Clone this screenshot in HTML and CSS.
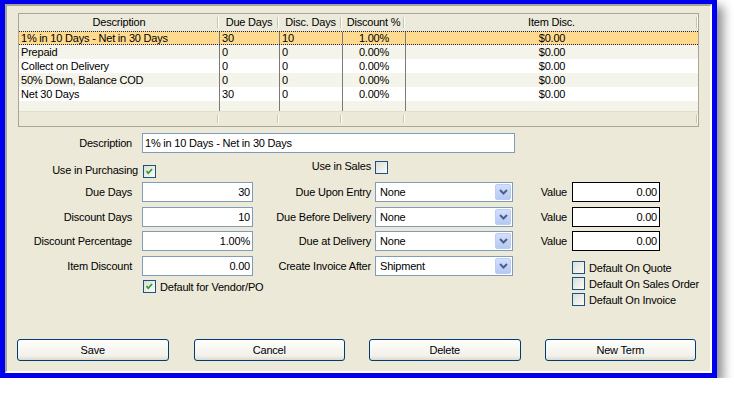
FILE: index.html
```html
<!DOCTYPE html>
<html lang="en">
<head>
    <meta charset="UTF-8">
    <title>Terms</title>
    <link rel="stylesheet" href="styles.css">
</head>
<body>
    <div class="window">
        <div class="panel">
            <div class="terms-grid">
                <div class="grid-head">
                    <div class="hcell">Description</div>
                    <div class="hcell">Due Days</div>
                    <div class="hcell">Disc. Days</div>
                    <div class="hcell">Discount %</div>
                    <div class="hcell">Item Disc.</div>
                </div>
                <div class="grid-row selected">
                    <div class="cell">1% in 10 Days - Net in 30 Days</div>
                    <div class="cell">30</div>
                    <div class="cell">10</div>
                    <div class="cell center">1.00%</div>
                    <div class="cell center">$0.00</div>
                </div>
                <div class="grid-row">
                    <div class="cell">Prepaid</div>
                    <div class="cell">0</div>
                    <div class="cell">0</div>
                    <div class="cell center">0.00%</div>
                    <div class="cell center">$0.00</div>
                </div>
                <div class="grid-row alt">
                    <div class="cell">Collect on Delivery</div>
                    <div class="cell">0</div>
                    <div class="cell">0</div>
                    <div class="cell center">0.00%</div>
                    <div class="cell center">$0.00</div>
                </div>
                <div class="grid-row">
                    <div class="cell">50% Down, Balance COD</div>
                    <div class="cell">0</div>
                    <div class="cell">0</div>
                    <div class="cell center">0.00%</div>
                    <div class="cell center">$0.00</div>
                </div>
                <div class="grid-row alt">
                    <div class="cell">Net 30 Days</div>
                    <div class="cell">30</div>
                    <div class="cell">0</div>
                    <div class="cell center">0.00%</div>
                    <div class="cell center">$0.00</div>
                </div>
                <div class="grid-row empty">
                    <div class="cell"></div>
                    <div class="cell"></div>
                    <div class="cell"></div>
                    <div class="cell"></div>
                    <div class="cell"></div>
                </div>
                <div class="grid-foot">
                    <div class="fcell"></div>
                    <div class="fcell"></div>
                    <div class="fcell"></div>
                    <div class="fcell"></div>
                    <div class="fcell"></div>
                </div>
            </div>

            <div class="term-form">
                <label class="lbl r-desc c1">Description</label>
                <div class="field desc-field">1% in 10 Days - Net in 30 Days</div>

                <label class="lbl r-use c1 tight">Use in Purchasing</label>
                <span class="check checked purch-check">
                    <svg width="13" height="13" viewBox="0 0 13 13"><polyline points="3,6 5,8.5 9.5,3.5" fill="none" stroke="#21a121" stroke-width="2"/></svg>
                </span>
                <label class="lbl r-use c3">Use in Sales</label>
                <span class="check sales-check"></span>

                <label class="lbl r1 c1">Due Days</label>
                <div class="field num r1 c2">30</div>
                <label class="lbl r1 c3">Due Upon Entry</label>
                <div class="dropdown r1 c4">None<span class="drop-btn"><svg width="9" height="6" viewBox="0 0 9 6"><polyline points="1,1 4.5,4.5 8,1" fill="none" stroke="#4d6185" stroke-width="2"/></svg></span></div>
                <label class="lbl r1 c5">Value</label>
                <div class="field num value r1 c6">0.00</div>

                <label class="lbl r2 c1">Discount Days</label>
                <div class="field num r2 c2">10</div>
                <label class="lbl r2 c3">Due Before Delivery</label>
                <div class="dropdown r2 c4">None<span class="drop-btn"><svg width="9" height="6" viewBox="0 0 9 6"><polyline points="1,1 4.5,4.5 8,1" fill="none" stroke="#4d6185" stroke-width="2"/></svg></span></div>
                <label class="lbl r2 c5">Value</label>
                <div class="field num value r2 c6">0.00</div>

                <label class="lbl r3 c1">Discount Percentage</label>
                <div class="field num r3 c2">1.00%</div>
                <label class="lbl r3 c3">Due at Delivery</label>
                <div class="dropdown r3 c4">None<span class="drop-btn"><svg width="9" height="6" viewBox="0 0 9 6"><polyline points="1,1 4.5,4.5 8,1" fill="none" stroke="#4d6185" stroke-width="2"/></svg></span></div>
                <label class="lbl r3 c5">Value</label>
                <div class="field num value r3 c6">0.00</div>

                <label class="lbl r4 c1">Item Discount</label>
                <div class="field num r4 c2">0.00</div>
                <label class="lbl r4 c3">Create Invoice After</label>
                <div class="dropdown r4 c4">Shipment<span class="drop-btn"><svg width="9" height="6" viewBox="0 0 9 6"><polyline points="1,1 4.5,4.5 8,1" fill="none" stroke="#4d6185" stroke-width="2"/></svg></span></div>

                <div class="check-line vendor-line">
                    <span class="check checked">
                        <svg width="13" height="13" viewBox="0 0 13 13"><polyline points="3,6 5,8.5 9.5,3.5" fill="none" stroke="#21a121" stroke-width="2"/></svg>
                    </span>
                    Default for Vendor/PO
                </div>

                <div class="defaults">
                    <div class="check-line"><span class="check"></span>Default On Quote</div>
                    <div class="check-line"><span class="check"></span>Default On Sales Order</div>
                    <div class="check-line"><span class="check"></span>Default On Invoice</div>
                </div>
            </div>

            <div class="btn-row">
                <button class="xp-btn">Save</button>
                <button class="xp-btn">Cancel</button>
                <button class="xp-btn">Delete</button>
                <button class="xp-btn">New Term</button>
            </div>
        </div>
    </div>
</body>
</html>
```

FILE: styles.css
```css
body {
    margin: 0;
    padding: 0;
    background: #fff;
    font-family: "Liberation Sans", Arial, sans-serif;
    font-size: 11px;
    letter-spacing: -0.2px;
    color: #000;
}

.window {
    box-sizing: border-box;
    width: 717px;
    height: 378px;
    border: 5px solid #0000ee;
    border-top-width: 4px;
    box-shadow: 6px 6px 10px rgba(0, 0, 0, 0.45);
}
.panel {
    box-sizing: border-box;
    height: 100%;
    background: #ece9d8;
    border: 2px solid #fff;
    border-top-color: #a7a598;
    border-left-color: #a7a598;
    padding: 7px 11px 10px 11px;
    display: flex;
    flex-direction: column;
}

/* list of terms */
.terms-grid {
    box-sizing: border-box;
    height: 114px;
    border: 1px solid #a9a699;
    background: #ece9d8;
    display: flex;
    flex-direction: column;
}
.grid-head,
.grid-row,
.grid-foot {
    display: grid;
    grid-template-columns: 200px 60px 63px 63px 1fr;
}
.grid-head {
    height: 17px;
    background: #ebeadb;
}
.hcell {
    text-align: center;
    line-height: 17px;
    position: relative;
}
.hcell::after,
.fcell::after {
    content: "";
    position: absolute;
    right: 0;
    top: 3px;
    bottom: 3px;
    width: 1px;
    background: #c7c5b2;
    border-right: 1px solid #fff;
}
.grid-row {
    height: 14px;
    background: #f5f4ea;
}
.grid-row.alt {
    background: #fff;
}
.grid-row.selected {
    background: #fdda8e;
    box-sizing: border-box;
    border-top: 1px dotted #1a2460;
    border-bottom: 1px dotted #1a2460;
}
.grid-row.empty {
    height: 10px;
    background: #f5f4ea;
}
.cell {
    line-height: 14px;
    padding-left: 2px;
    white-space: nowrap;
    overflow: hidden;
}
.selected .cell {
    line-height: 12px;
}
.cell + .cell {
    border-left: 1px solid #7a7a7a;
}
.cell:last-child {
    border-left: 1px solid #7a7a7a;
}
.cell.center {
    text-align: center;
    padding-left: 0;
}
.grid-foot {
    flex: 1;
    border-top: 1px solid #e2dfcc;
}
.fcell {
    position: relative;
}

/* edit form */
.term-form {
    margin-top: 6px;
    display: grid;
    grid-template-columns: 124px 111px 122px 138px 59px 88px;
    grid-template-rows: 20px 29px 25px 24px 25px 24px 16px;
}
.lbl {
    text-align: right;
    padding-right: 10px;
    line-height: 20px;
    white-space: nowrap;
}
.lbl.c3 { padding-right: 4px; }
.lbl.c5 { padding-right: 5px; }
.lbl.tight { padding-right: 4px; }

.c1 { grid-column: 1; }
.c2 { grid-column: 2; }
.c3 { grid-column: 3; }
.c4 { grid-column: 4; }
.c5 { grid-column: 5; }
.c6 { grid-column: 6; }
.r-desc { grid-row: 1; }
.r-use { grid-row: 2; }
.r1 { grid-row: 3; }
.r2 { grid-row: 4; }
.r3 { grid-row: 5; }
.r4 { grid-row: 6; }

.field {
    box-sizing: border-box;
    height: 20px;
    background: #fff;
    border: 1px solid #7f9db9;
    line-height: 18px;
    padding: 0 2px;
    white-space: nowrap;
}
.field.num {
    text-align: right;
}
.field.value {
    border-color: #000;
}
.desc-field {
    grid-row: 1;
    grid-column: 2 / 5;
    margin-right: -2px;
}

.lbl.r-use {
    line-height: 18px;
    padding-top: 8px;
}
.lbl.r-use.c3 {
    padding-top: 4px;
}
.purch-check {
    grid-row: 2;
    grid-column: 2;
    margin: 12px 0 0 1px;
}
.sales-check {
    grid-row: 2;
    grid-column: 4;
    margin: 8px 0 0 0;
}

.dropdown {
    box-sizing: border-box;
    height: 20px;
    background: #fff;
    border: 1px solid #7f9db9;
    line-height: 18px;
    padding-left: 4px;
    position: relative;
}
.drop-btn {
    position: absolute;
    right: 1px;
    top: 1px;
    width: 16px;
    height: 16px;
    box-sizing: border-box;
    border: 1px solid #b9cdf7;
    border-radius: 2px;
    background: linear-gradient(#d2dffc, #b6c9f5);
    display: flex;
    align-items: center;
    justify-content: center;
}

.check {
    box-sizing: border-box;
    flex-shrink: 0;
    width: 13px;
    height: 13px;
    border: 1px solid #1c5180;
    background: linear-gradient(135deg, #dcdcd7, #fbfbf9);
    display: inline-flex;
    align-items: center;
    justify-content: center;
}
.check svg {
    display: block;
}
.check-line {
    display: flex;
    align-items: center;
    gap: 4px;
    height: 13px;
    white-space: nowrap;
}
.vendor-line {
    grid-row: 7;
    grid-column: 2 / 4;
    margin-left: 1px;
}
.defaults {
    grid-row: 6 / 8;
    grid-column: 6;
    padding-top: 5px;
    display: flex;
    flex-direction: column;
    gap: 3px;
}

/* buttons */
.btn-row {
    margin: auto 3px 0 -1px;
    display: flex;
    gap: 24px;
}
.xp-btn {
    width: 153px;
    height: 22px;
    border: 1px solid #003c74;
    border-radius: 3px;
    background: linear-gradient(#fefefd, #f2f1ea 80%, #dcdad0);
    font-family: "Liberation Sans", Arial, sans-serif;
    font-size: 11px;
    letter-spacing: -0.2px;
    color: #000;
    padding: 0;
    cursor: pointer;
}
.xp-btn:first-child {
    margin-right: 1px;
}
.xp-btn:last-child {
    margin-left: auto;
}
```
